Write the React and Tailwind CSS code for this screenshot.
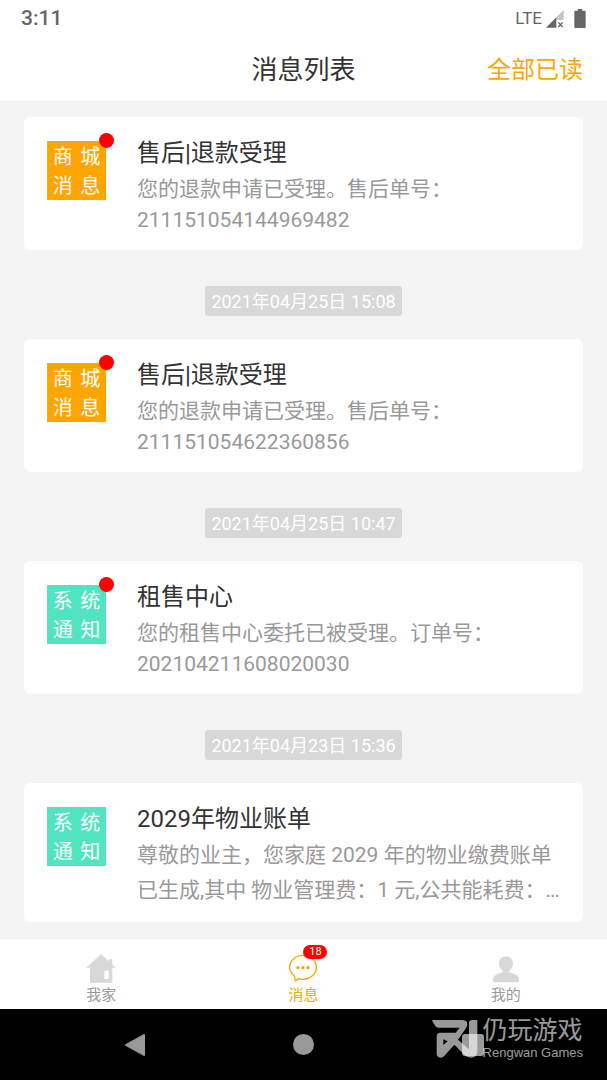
const messages = [
  {
    id: 1,
    kind: "mall",
    unread: true,
    title: "售后|退款受理",
    body: "您的退款申请已受理。售后单号：211151054144969482",
  },
  {
    id: 2,
    kind: "mall",
    unread: true,
    time: "2021年04月25日 15:08",
    title: "售后|退款受理",
    body: "您的退款申请已受理。售后单号：211151054622360856",
  },
  {
    id: 3,
    kind: "system",
    unread: true,
    time: "2021年04月25日 10:47",
    title: "租售中心",
    body: "您的租售中心委托已被受理。订单号：202104211608020030",
  },
  {
    id: 4,
    kind: "system",
    unread: false,
    long: true,
    time: "2021年04月23日 15:36",
    title: "2029年物业账单",
    body: "尊敬的业主，您家庭 2029 年的物业缴费账单已生成,其中 物业管理费：1 元,公共能耗费：…",
  },
];

const kinds = {
  mall: { chars: ["商", "城", "消", "息"], color: "bg-[#ffa500]" },
  system: { chars: ["系", "统", "通", "知"], color: "bg-[#51e4c1]" },
};

const StatusBar = () => (
  <div className="flex h-9 items-center justify-between pt-px pr-[21px] pl-[21px] text-[#666]">
    <span className="text-[21px] font-medium">3:11</span>
    <div className="flex items-center">
      <span className="text-[17px]">LTE</span>
      <svg className="ml-1 h-[18px] w-[18px]" viewBox="0 0 54 54">
        <path d="M31 22 53 0v30H31z" fill="#c6c6c6" />
        <path d="M0 53 31 22v31z" fill="#666" />
        <path d="m37 37 13 14m0-14L37 51" stroke="#666" strokeWidth="4" />
      </svg>
      <svg className="ml-[10px] h-[19px] w-3" viewBox="0 0 36 57">
        <path d="M11 0h14v5h7q3 0 3 3v46q0 3-3 3H4q-3 0-3-3V8q0-3 3-3h7z" fill="#666" />
      </svg>
    </div>
  </div>
);

const Header = () => (
  <header className="grid h-[65px] grid-cols-[1fr_auto_1fr] items-center px-6 pt-[3px]">
    <h1 className="col-start-2 text-[26px] text-[#333]">消息列表</h1>
    <button type="button" className="justify-self-end text-2xl text-[#ffa500]">
      全部已读
    </button>
  </header>
);

const KindIcon = ({ kind, unread }) => (
  <div
    className={`relative mt-[6px] grid h-[59px] w-[59px] shrink-0 grid-cols-2 place-items-center px-[2px] pt-[2px] text-xl leading-none text-white ${kinds[kind].color}`}
  >
    {kinds[kind].chars.map((char) => (
      <span key={char}>{char}</span>
    ))}
    {unread && (
      <i className="absolute -top-2 -right-2 h-[15px] w-[15px] rounded-full bg-[#f00]" />
    )}
  </div>
);

const Message = ({ item }) => (
  <li className="flex flex-col">
    {item.time && (
      <time className="mt-9 mb-[23px] self-center rounded-[3px] bg-[#d8d8d8] px-[6px] pt-px text-lg leading-[29px] text-white">
        {item.time}
      </time>
    )}
    <article className="flex gap-[31px] rounded-md bg-white px-[23px] pt-[18px] pb-[14px]">
      <KindIcon kind={item.kind} unread={item.unread} />
      <div className="min-w-0 flex-1">
        <h2 className="text-2xl leading-[37px] text-[#333]">{item.title}</h2>
        <p
          className={`text-[21px] text-[#999] ${item.long ? "leading-[35px]" : "mt-[2px] leading-[31px]"}`}
        >
          {item.body}
        </p>
      </div>
    </article>
  </li>
);

const HomeIcon = () => (
  <svg className="h-[29px] w-[30px]" viewBox="0 0 90 87" fill="#d8d8d8">
    <path
      fillRule="evenodd"
      d="M45 1 69 22v-4q0-3 5-3t5 3v14l11 9H79v42q0 3-3 3H15q-3 0-3-3V41H0zM55 50v25h13V50z"
    />
  </svg>
);

const ChatIcon = () => (
  <svg className="h-[29px] w-7" viewBox="0 0 84 87">
    <path
      d="M17 67C8 60 2 51 2 40 2 20 20 4 42 4s40 16 40 36-18 36-40 36q-7 0-13-2L19 81z"
      fill="none"
      stroke="#ffa500"
      strokeWidth="4"
      strokeLinejoin="round"
    />
    <circle cx="27" cy="41" r="5" fill="#ffa500" />
    <circle cx="42" cy="41" r="5" fill="#ffa500" />
    <circle cx="57" cy="41" r="5" fill="#ffa500" />
  </svg>
);

const UserIcon = () => (
  <svg className="h-[29px] w-[26px]" viewBox="0 0 78 87" fill="#d8d8d8">
    <path d="M39 7c12 0 21 9 21 21 0 10-5 18-11 22v5c14 4 29 10 29 20v7q0 3-3 3H3q-3 0-3-3v-7c0-10 15-16 29-20v-5c-6-4-11-12-11-22C18 16 27 7 39 7z" />
  </svg>
);

const tabs = [
  { label: "我家", Icon: HomeIcon },
  { label: "消息", Icon: ChatIcon, badge: 18, active: true },
  { label: "我的", Icon: UserIcon },
];

const TabBar = () => (
  <nav className="grid h-[70px] grid-cols-3 bg-white">
    {tabs.map(({ label, Icon, badge, active }) => (
      <a
        key={label}
        href="#"
        className={`flex flex-col items-center pt-[15px] text-[15px] leading-6 ${active ? "text-[#ffa500]" : "text-[#999]"}`}
      >
        <span className="relative">
          <Icon />
          {badge && (
            <span className="absolute -top-[9px] left-[14px] w-6 rounded-full bg-[#f00] text-center text-[11px] leading-[14px] text-white">
              {badge}
            </span>
          )}
        </span>
        {label}
      </a>
    ))}
  </nav>
);

const Brand = () => (
  <div className="absolute top-2 right-6 flex gap-px text-white opacity-60">
    <svg className="mt-[2px] h-10 w-[50px]" viewBox="0 0 150 120" fill="#fff">
      <path
        fillRule="evenodd"
        d="M0 3h87q20 0 19 13 0 6-5 13L78 62l33 29V12q0-9 9-9h16v93q0 20-20 20-10 0-18-8L67 77l-31 35q-7 7-15 3-7-3-7-10V53q0-12 11-12h46l12-15H19Q9 26 0 3zM34 61v17l13-11z"
      />
    </svg>
    <div>
      <div className="text-[25px] leading-7">仍玩游戏</div>
      <div className="font-['Liberation_Sans',sans-serif] text-[13px] leading-4">
        Rengwan Games
      </div>
    </div>
  </div>
);

const SystemNav = () => (
  <div className="relative grid h-[71px] grid-cols-3 place-items-center bg-black px-[50px]">
    <button type="button" aria-label="返回">
      <svg className="h-6 w-[22px]" viewBox="0 0 22 24">
        <path
          d="M2 12 20 2v20z"
          fill="#999"
          stroke="#999"
          strokeWidth="2"
          strokeLinejoin="round"
        />
      </svg>
    </button>
    <button
      type="button"
      aria-label="主屏幕"
      className="h-[21px] w-[21px] rounded-full bg-[#999]"
    />
    <button
      type="button"
      aria-label="最近任务"
      className="h-[22px] w-[22px] rounded-[3px] bg-[#999]"
    />
    <Brand />
  </div>
);

const App = () => (
  <div
    lang="zh-CN"
    className="flex min-h-screen flex-col bg-white font-[Roboto,'Noto_Sans_CJK_SC',sans-serif]"
  >
    <StatusBar />
    <Header />
    <main className="flex-1 bg-[#f4f4f4] px-6 py-4">
      <ul>
        {messages.map((item) => (
          <Message key={item.id} item={item} />
        ))}
      </ul>
    </main>
    <TabBar />
    <SystemNav />
  </div>
);

export default App;
